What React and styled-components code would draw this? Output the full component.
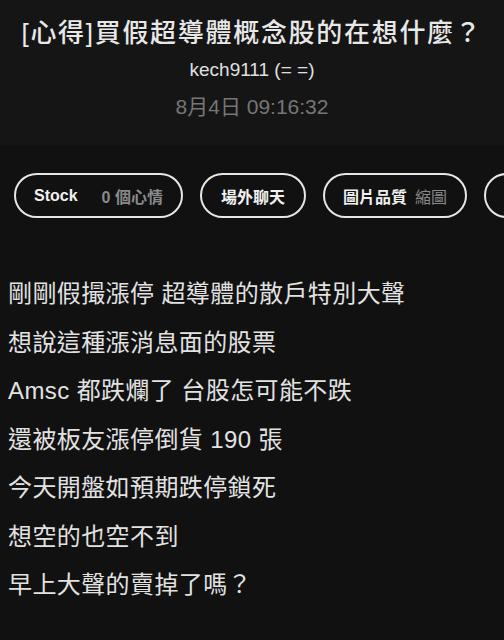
import React from "react";
import styled, { createGlobalStyle } from "styled-components";

const Global = createGlobalStyle`
  html, body { margin: 0; padding: 0; background: #111111; }
  body { font-family: "Liberation Sans", "Noto Sans CJK TC", sans-serif; color: #e4e4e4; }
  * { box-sizing: border-box; }
`;

const Page = styled.div`
  width: 504px;
  height: 640px;
  overflow: hidden;
  background: #111111;
`;

const Header = styled.header`
  background: #151515;
  padding: 16px 0 25px;
  display: flex;
  flex-direction: column;
  align-items: center;
`;

const Title = styled.h1`
  margin: 0;
  font-size: 26px;
  line-height: 34px;
  font-weight: 500;
  letter-spacing: 1.7px;
  color: #e8e8e8;
  white-space: nowrap;
`;

const Author = styled.div`
  margin-top: 8px;
  font-size: 19px;
  line-height: 24px;
  color: #e0e0e0;
`;

const DateLine = styled.div`
  margin-top: 12px;
  font-size: 21px;
  line-height: 26px;
  color: #767676;
`;

const ChipRow = styled.nav`
  display: flex;
  gap: 17px;
  padding: 28px 0 0 14px;
  white-space: nowrap;
  overflow: hidden;
`;

const Chip = styled.div`
  flex: none;
  height: 45px;
  border: 2px solid #e6e6e6;
  border-radius: 23px;
  display: flex;
  align-items: center;
  padding: 0 ${(p) => p.$pad || 18}px;
  font-size: 16px;
  font-weight: 700;
  color: #f0f0f0;
`;

const ChipSub = styled.span`
  margin-left: ${(p) => p.$gap || 8}px;
  color: #8a8a8a;
  font-weight: ${(p) => p.$weight || 400};
`;

const Body = styled.article`
  padding: 52px 0 0 8px;
`;

const Line = styled.p`
  margin: 0;
  font-size: 24px;
  line-height: 48.5px;
  letter-spacing: 0.4px;
  color: #e2e2e2;
  white-space: nowrap;
`;

const lines = [
  "剛剛假撮漲停 超導體的散戶特別大聲",
  "想說這種漲消息面的股票",
  "Amsc 都跌爛了 台股怎可能不跌",
  "還被板友漲停倒貨 190 張",
  "今天開盤如預期跌停鎖死",
  "想空的也空不到",
  "早上大聲的賣掉了嗎？",
];

export default function App() {
  return (
    <Page>
      <Global />
      <Header>
        <Title>[心得]買假超導體概念股的在想什麼？</Title>
        <Author>kech9111 (= =)</Author>
        <DateLine>8月4日 09:16:32</DateLine>
      </Header>
      <ChipRow>
        <Chip $pad={18}>
          Stock<ChipSub $gap={24} $weight={700}>0 個心情</ChipSub>
        </Chip>
        <Chip $pad={19}>場外聊天</Chip>
        <Chip $pad={18}>
          圖片品質<ChipSub>縮圖</ChipSub>
        </Chip>
        <Chip>推文排序</Chip>
      </ChipRow>
      <Body>
        {lines.map((l, i) => (
          <Line key={i}>{l}</Line>
        ))}
      </Body>
    </Page>
  );
}
